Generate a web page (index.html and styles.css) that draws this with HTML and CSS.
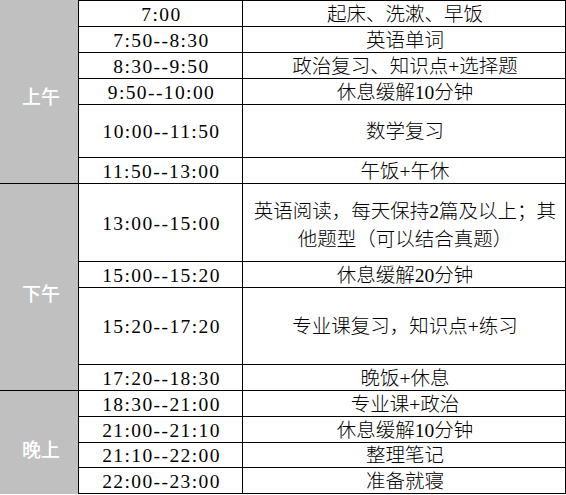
FILE: index.html
```html
<!DOCTYPE html>
<html lang="zh-CN">
<head>
<meta charset="utf-8">
<title>作息时间表</title>
<link rel="stylesheet" href="styles.css">
</head>
<body>
<div class="schedule">
  <div class="period period-first am">上午</div>
  <div class="cell time">7:00</div><div class="cell task">起床、洗漱、早饭</div>
  <div class="cell time">7:50--8:30</div><div class="cell task">英语单词</div>
  <div class="cell time">8:30--9:50</div><div class="cell task">政治复习、知识点+选择题</div>
  <div class="cell time">9:50--10:00</div><div class="cell task">休息缓解10分钟</div>
  <div class="cell time">10:00--11:50</div><div class="cell task">数学复习</div>
  <div class="cell time">11:50--13:00</div><div class="cell task">午饭+午休</div>

  <div class="period pm">下午</div>
  <div class="cell time">13:00--15:00</div><div class="cell task multi">英语阅读，每天保持2篇及以上；其<br>他题型（可以结合真题）</div>
  <div class="cell time">15:00--15:20</div><div class="cell task">休息缓解20分钟</div>
  <div class="cell time">15:20--17:20</div><div class="cell task">专业课复习，知识点+练习</div>
  <div class="cell time">17:20--18:30</div><div class="cell task">晚饭+休息</div>

  <div class="period period-last eve">晚上</div>
  <div class="cell time">18:30--21:00</div><div class="cell task">专业课+政治</div>
  <div class="cell time">21:00--21:10</div><div class="cell task">休息缓解10分钟</div>
  <div class="cell time">21:10--22:00</div><div class="cell task">整理笔记</div>
  <div class="cell time">22:00--23:00</div><div class="cell task">准备就寝</div>
</div>
</body>
</html>
```
FILE: styles.css
```css
html, body {
  margin: 0;
  padding: 0;
  background: #ffffff;
}

.schedule {
  width: 566px;
  box-sizing: border-box;
  display: grid;
  grid-template-columns: 78px 163px 322px;
  grid-template-rows: 25px 25px 25px 25px 52px 25px 77px 25px 76px 25px 25px 25px 24px 25px;
  grid-auto-flow: row;
  gap: 1px;
  padding: 1px 1px 1px 0;
  background: #000000;
  font-family: "Liberation Serif", "Noto Sans CJK SC", serif;
  font-size: 19.5px;
  font-weight: 300;
  color: #000000;
}

.period {
  background: #c0c0c0;
  color: #ffffff;
  font-family: "Noto Sans CJK SC", sans-serif;
  font-weight: 500;
  font-size: 19px;
  display: flex;
  align-items: center;
  justify-content: center;
  padding-left: 4px;
}

.period-first {
  margin-top: -1px;
}

.period-last {
  margin-bottom: -1px;
}

.am {
  grid-row: span 6;
  padding-top: 8px;
}

.pm {
  grid-row: span 4;
  padding-top: 10px;
}

.eve {
  grid-row: span 4;
  padding-top: 12px;
}

.cell {
  background: #ffffff;
  display: flex;
  align-items: center;
  justify-content: center;
  text-align: center;
  line-height: 26px;
  white-space: nowrap;
  padding-top: 2px;
  box-sizing: border-box;
}

.time {
  font-weight: 400;
  letter-spacing: 1.4px;
  padding-left: 2px;
}

.task {
  padding-left: 2px;
}

.multi {
  line-height: 28px;
  padding-top: 6px;
}
```
